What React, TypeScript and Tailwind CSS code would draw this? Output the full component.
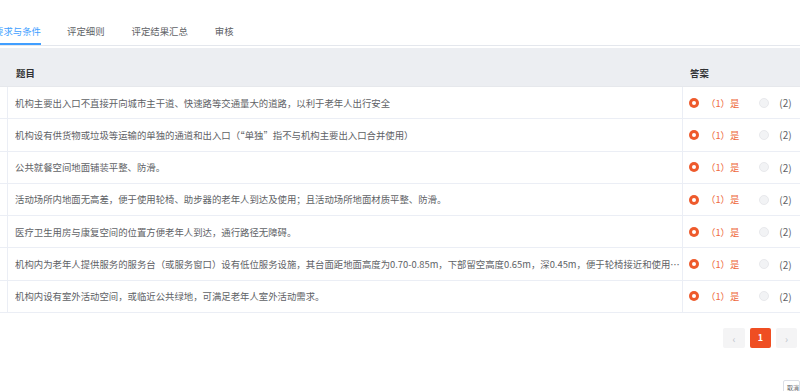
import React from "react";

const rows = [
  "机构主要出入口不直接开向城市主干道、快速路等交通量大的道路，以利于老年人出行安全",
  "机构设有供货物或垃圾等运输的单独的通道和出入口（“单独”指不与机构主要出入口合并使用）",
  "公共就餐空间地面铺装平整、防滑。",
  "活动场所内地面无高差，便于使用轮椅、助步器的老年人到达及使用；且活动场所地面材质平整、防滑。",
  "医疗卫生用房与康复空间的位置方便老年人到达，通行路径无障碍。",
  "机构内为老年人提供服务的服务台（或服务窗口）设有低位服务设施，其台面距地面高度为0.70-0.85m，下部留空高度0.65m，深0.45m，便于轮椅接近和使用，且有便于老年人使用的扶手等辅助设施",
  "机构内设有室外活动空间，或临近公共绿地，可满足老年人室外活动需求。",
];

const font = { fontFamily: '"Noto Sans CJK SC", "Liberation Sans", sans-serif' };

export default function App() {
  return (
    <div className="w-[800px] h-[391px] overflow-hidden bg-white relative text-[9.4px] text-[#606266]" style={font}>
      {/* tabs */}
      <div className="h-[46px] border-b border-[#e4e7ed] flex items-end -ml-[8px]">
        <div className="flex leading-[12px]">
          <div className="h-[20px] w-[49px] flex items-start justify-end text-[#409eff] border-b-2 border-[#409eff] mr-[26px]"><span className="whitespace-nowrap">要求与条件</span></div>
          <div className="h-[20px] flex items-start mr-[27px]">评定细则</div>
          <div className="h-[20px] flex items-start mr-[27px]">评定结果汇总</div>
          <div className="h-[20px] flex items-start">审核</div>
        </div>
      </div>
      {/* table */}
      <div className="mt-[2px]">
        <div className="flex h-[39px] bg-[#eceef2] border-b border-[#e6e8ec] text-[#303133] font-bold">
          <div className="w-[8px] flex items-center pt-[12px] overflow-hidden"><span className="text-[#606266] font-normal -ml-[4px]">-</span></div>
          <div className="w-[675px] flex items-center pl-[8px] pt-[12px]">题目</div>
          <div className="flex-1 flex items-center pl-[7px] pt-[12px]">答案</div>
        </div>
        {rows.map((t, i) => (
          <div key={i} className="flex h-[32.3px] border-b border-[#ebeef5]">
            <div className="w-[8px] border-r border-[#ebeef5]"></div>
            <div className="w-[675px] flex items-center pl-[7px] pr-[1px] border-r border-[#ebeef5]">
              <span className="truncate">{t}</span>
            </div>
            <div className="flex-1 flex items-center pl-[6px] whitespace-nowrap">
              <span className="w-[10px] h-[10px] rounded-full bg-[#ee5a2c] flex items-center justify-center">
                <span className="w-[4px] h-[4px] rounded-full bg-white"></span>
              </span>
              <span className="ml-[7px] text-[#ee6a3e]">（1）是</span>
              <span className="ml-[20px] w-[10px] h-[10px] rounded-full bg-[#f2f3f5] border border-[#e8e9ec]"></span>
              <span className="ml-[10px] text-[#606266] text-[10px]">(2)</span>
            </div>
          </div>
        ))}
      </div>
      {/* pagination */}
      <div className="flex justify-end mt-[15px] pr-[3px] gap-[5px]">
        <div className="w-[22px] h-[20px] bg-[#f4f4f5] rounded-[2px] flex items-center justify-center text-[#c0c4cc] text-[10px]">&lsaquo;</div>
        <div className="w-[21px] h-[20px] bg-[#ef4e22] rounded-[2px] flex items-center justify-center text-white font-bold text-[9px]">1</div>
        <div className="w-[21px] h-[20px] bg-[#f4f4f5] rounded-[2px] flex items-center justify-center text-[#c0c4cc] text-[10px]">&rsaquo;</div>
      </div>
      <div className="absolute right-[0px] top-[380px] w-[17px] h-[14px] border border-[#dcdfe6] rounded-[2px] bg-white text-[6px] pl-[3px] pt-[2px] text-[#606266] overflow-hidden whitespace-nowrap">取消</div>
    </div>
  );
}
